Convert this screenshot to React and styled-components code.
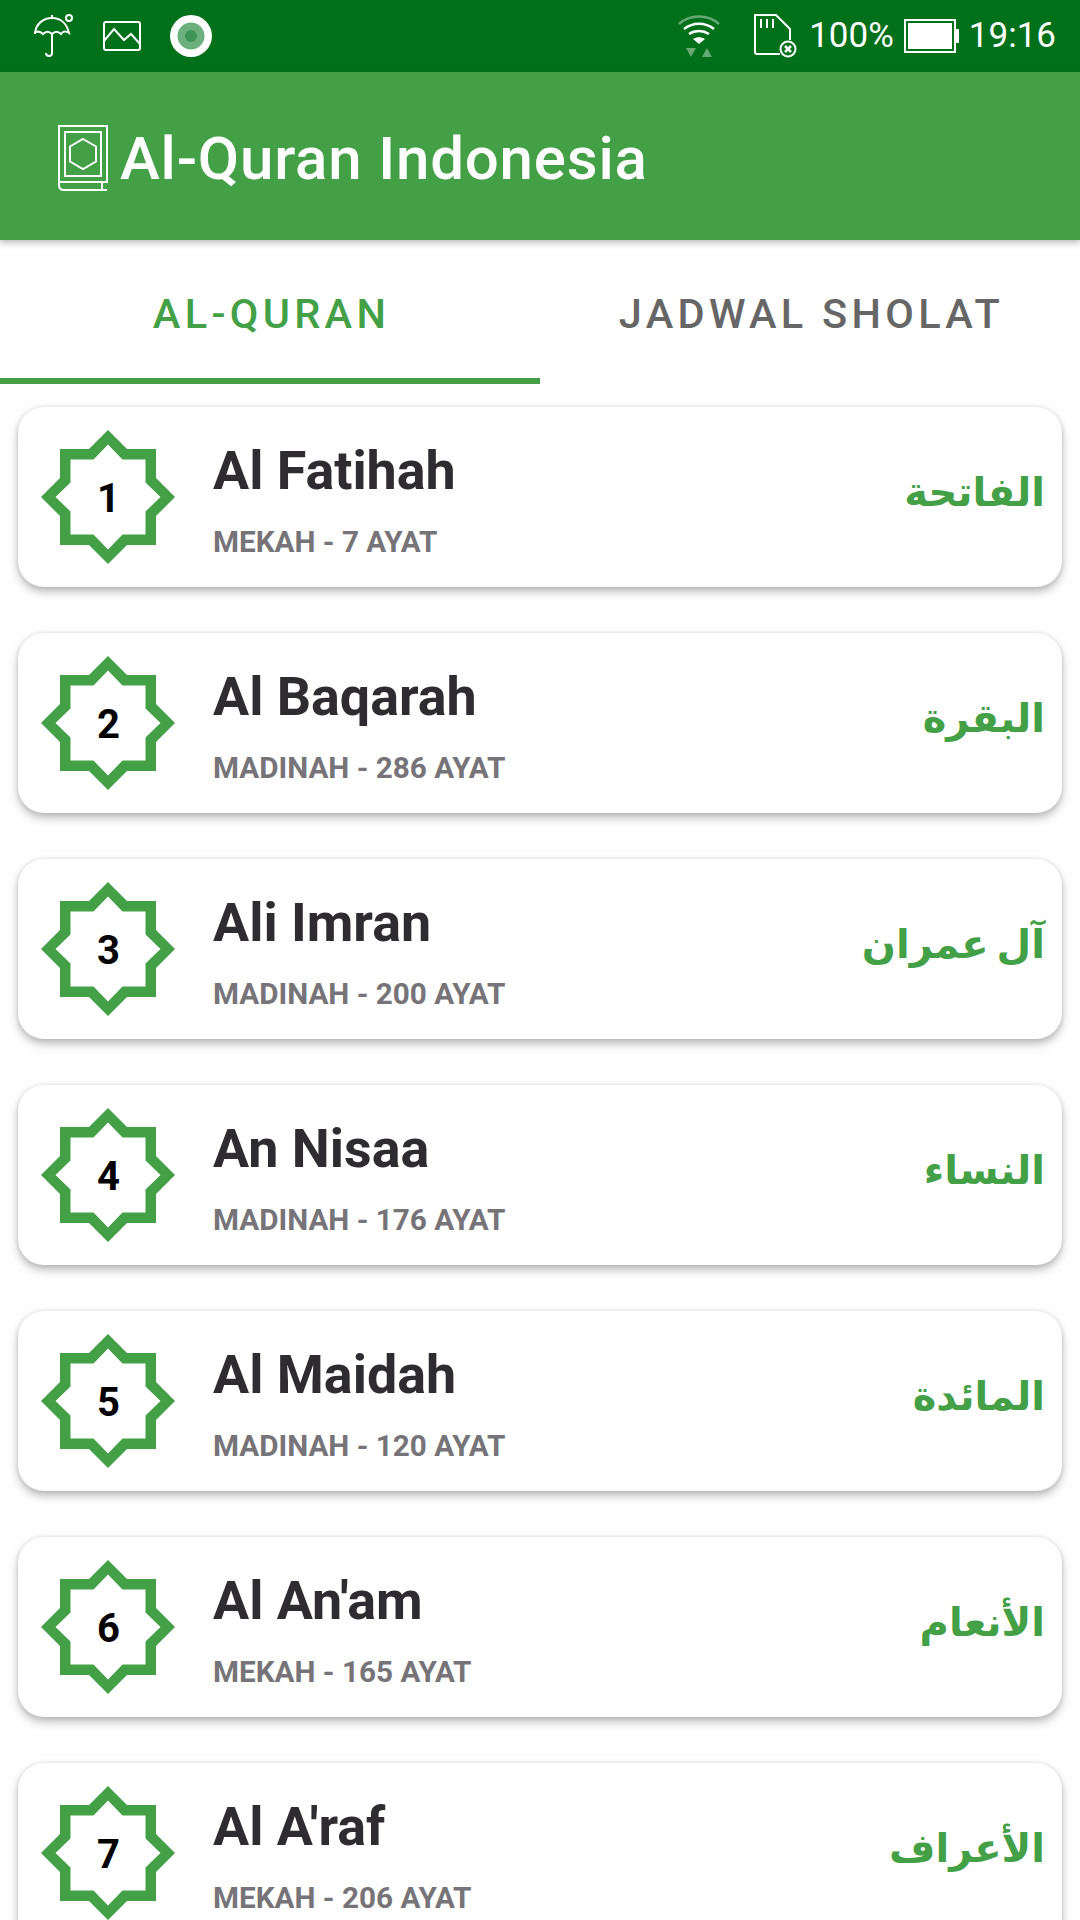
import React from "react";
import styled, { createGlobalStyle } from "styled-components";

const GREEN = "#43a047";

const Global = createGlobalStyle`
  html, body { margin: 0; padding: 0; background: #fefefe; }
  body { font-family: Roboto, "Liberation Sans", sans-serif; width: 1080px; height: 1920px; overflow: hidden; }
`;

const Screen = styled.div`
  width: 1080px;
  height: 1920px;
  overflow: hidden;
  display: flex;
  flex-direction: column;
  background: #fefefe;
`;

const StatusBar = styled.div`
  height: 72px;
  flex: none;
  background: #00701a;
  display: flex;
  align-items: center;
  justify-content: space-between;
  padding: 0 24px 0 34px;
  color: #fff;
`;

const StatusGroup = styled.div`
  display: flex;
  align-items: center;
  gap: ${(p) => p.$gap}px;
`;

const StatusText = styled.span`
  font-size: 35px;
  font-weight: 400;
  line-height: 72px;
`;

const AppBar = styled.header`
  height: 168px;
  flex: none;
  box-sizing: border-box;
  background: ${GREEN};
  display: flex;
  align-items: center;
  gap: 12px;
  padding: 4px 0 0 58px;
  box-shadow: 0 3px 6px rgba(0, 0, 0, 0.25);
  position: relative;
  z-index: 2;
`;

const AppTitle = styled.h1`
  margin: 0;
  font-size: 60px;
  font-weight: 500;
  letter-spacing: 0.8px;
  color: #fff;
`;

const Tabs = styled.nav`
  height: 144px;
  flex: none;
  display: flex;
`;

const Tab = styled.div`
  flex: 1;
  display: flex;
  align-items: center;
  justify-content: center;
  padding: 8px 0 0 3px;
  box-sizing: border-box;
  font-size: 41.5px;
  font-weight: 500;
  letter-spacing: 4.3px;
  color: ${(p) => (p.$active ? GREEN : "#666")};
  border-bottom: 6px solid ${(p) => (p.$active ? GREEN : "transparent")};
`;

const List = styled.div`
  display: flex;
  flex-direction: column;
  gap: 46px;
  padding: 23px 18px 0;
`;

const Card = styled.article`
  height: 180px;
  flex: none;
  box-sizing: border-box;
  background: #fff;
  border-radius: 26px;
  box-shadow: 0 5px 8px rgba(0, 0, 0, 0.25), 0 0 4px rgba(0, 0, 0, 0.12);
  display: flex;
  align-items: center;
  padding: 0 17px 0 23px;
`;

const Badge = styled.div`
  width: 134px;
  height: 134px;
  flex: none;
  display: grid;
  place-items: center;
  & > * { grid-area: 1 / 1; }
`;

const BadgeNumber = styled.span`
  font-size: 40px;
  font-weight: 700;
  color: #000;
  line-height: 1;
  padding: 4px 0 0 1px;
`;

const Info = styled.div`
  flex: 1;
  margin-left: 38px;
  padding-top: 4px;
  display: flex;
  flex-direction: column;
  gap: 22px;
`;

const Name = styled.div`
  font-size: 53.8px;
  font-weight: 700;
  line-height: 64px;
  color: #2e2c30;
`;

const Meta = styled.div`
  font-size: 29.7px;
  font-weight: 700;
  line-height: 34px;
  color: #767478;
`;

const Arabic = styled.div`
  font-family: "DejaVu Sans", sans-serif;
  font-size: 40px;
  font-weight: 700;
  color: ${GREEN};
  direction: rtl;
  word-spacing: -6px;
  margin-bottom: 10px;
`;

const Umbrella = () => (
  <svg width="40" height="44" viewBox="0 0 40 44" fill="none" stroke="#fff" strokeWidth="2">
    <path d="M1 19C2 10 9 4 18 4s15 6 17 15c-3-2-6-2-8 1-3-3-6-3-9 0-3-3-6-3-9 0-3-3-6-3-9-1z" />
    <path d="M18 20v19c0 4-6 4-6 0M18 1v3" />
    <circle cx="35" cy="4" r="3" />
  </svg>
);

const Picture = () => (
  <svg width="38" height="30" viewBox="0 0 38 30" fill="none" stroke="#fff" strokeWidth="2">
    <rect x="1" y="1" width="36" height="28" rx="2" />
    <path d="M1 20L11 8l10 11 7-6 9 10" />
  </svg>
);

const Recorder = () => (
  <svg width="42" height="42" viewBox="0 0 42 42">
    <circle cx="21" cy="21" r="21" fill="#fff" />
    <circle cx="21" cy="21" r="13.5" fill="#6bb07d" />
    <circle cx="21" cy="21" r="6" fill="#3f9356" />
  </svg>
);

const Wifi = () => (
  <svg width="42" height="44" viewBox="0 0 42 44" fill="none">
    <path d="M1 10C12 0 30 0 41 10" stroke="#fff" strokeOpacity="0.4" strokeWidth="2.5" />
    <path d="M6 15c9-7 21-7 30 0" stroke="#fff" strokeWidth="2.5" />
    <path d="M11 20c6-4 14-4 20 0" stroke="#fff" strokeWidth="2.5" />
    <path d="M15 25c4-2.500 8-2.500 12 0l-6 5z" fill="#fff" />
    <path d="M8 34h10l-5 9zM34 43H24l5-9z" fill="#fff" fillOpacity="0.4" />
  </svg>
);

const SdCard = () => (
  <svg width="46" height="44" viewBox="0 0 46 44" fill="none" stroke="#fff" strokeWidth="2">
    <path d="M27 40H4a2 2 0 0 1-2-2V1h21l14 14v11" />
    <path d="M8 5v9M14 5v9M20 5v9" />
    <circle cx="35" cy="35" r="7.500" strokeWidth="2" />
    <path d="M32 32l6 6M38 32l-6 6" strokeWidth="2.500" />
  </svg>
);

const Battery = () => (
  <svg width="55" height="34" viewBox="0 0 55 34">
    <rect x="1" y="1" width="50" height="32" fill="none" stroke="#fff" strokeWidth="2" />
    <rect x="4" y="4" width="44" height="26" fill="#fff" />
    <rect x="51" y="10" width="4" height="14" fill="#fff" />
  </svg>
);

const BookIcon = () => (
  <svg width="50" height="66" viewBox="0 0 50 66" fill="none" stroke="#fff" strokeWidth="2">
    <path d="M1 1h48v56H1zM1 57v3c0 3 2 5 5 5h43M44 57v8" />
    <rect x="7" y="7" width="36" height="44" />
    <path d="M25 14l13 7.500v15L25 44l-13-7.500v-15z" />
  </svg>
);

const Star = () => (
  <svg width="134" height="134" viewBox="0 0 134 134">
    <path
      fill={GREEN}
      fillRule="evenodd"
      d="M67 0L86 19H115V48L134 67L115 86V115H86L67 134L48 115H19V86L0 67L19 48V19H48Z M67 14.500L52.500 29.500H29.500V52.500L14.500 67L29.500 81.500V104.500H52.500L67 119.500L81.500 104.500H104.500V81.500L119.500 67L104.500 52.500V29.500H81.500Z"
    />
  </svg>
);

const surahs = [
  ["Al Fatihah", "MEKAH - 7 AYAT", "الفاتحة"],
  ["Al Baqarah", "MADINAH - 286 AYAT", "البقرة"],
  ["Ali Imran", "MADINAH - 200 AYAT", "آل عمران"],
  ["An Nisaa", "MADINAH - 176 AYAT", "النساء"],
  ["Al Maidah", "MADINAH - 120 AYAT", "المائدة"],
  ["Al An'am", "MEKAH - 165 AYAT", "الأنعام"],
  ["Al A'raf", "MEKAH - 206 AYAT", "الأعراف"],
];

export default function App() {
  return (
    <Screen>
      <Global />
      <StatusBar>
        <StatusGroup $gap={29}>
          <Umbrella />
          <Picture />
          <Recorder />
        </StatusGroup>
        <StatusGroup $gap={33}>
          <Wifi />
          <StatusGroup $gap={10}>
            <SdCard />
            <StatusText>100%</StatusText>
            <Battery />
            <StatusText>19:16</StatusText>
          </StatusGroup>
        </StatusGroup>
      </StatusBar>
      <AppBar>
        <BookIcon />
        <AppTitle>Al-Quran Indonesia</AppTitle>
      </AppBar>
      <Tabs>
        <Tab $active>AL-QURAN</Tab>
        <Tab>JADWAL SHOLAT</Tab>
      </Tabs>
      <List>
        {surahs.map(([name, meta, arabic], i) => (
          <Card key={name}>
            <Badge>
              <Star />
              <BadgeNumber>{i + 1}</BadgeNumber>
            </Badge>
            <Info>
              <Name>{name}</Name>
              <Meta>{meta}</Meta>
            </Info>
            <Arabic>{arabic}</Arabic>
          </Card>
        ))}
      </List>
    </Screen>
  );
}
